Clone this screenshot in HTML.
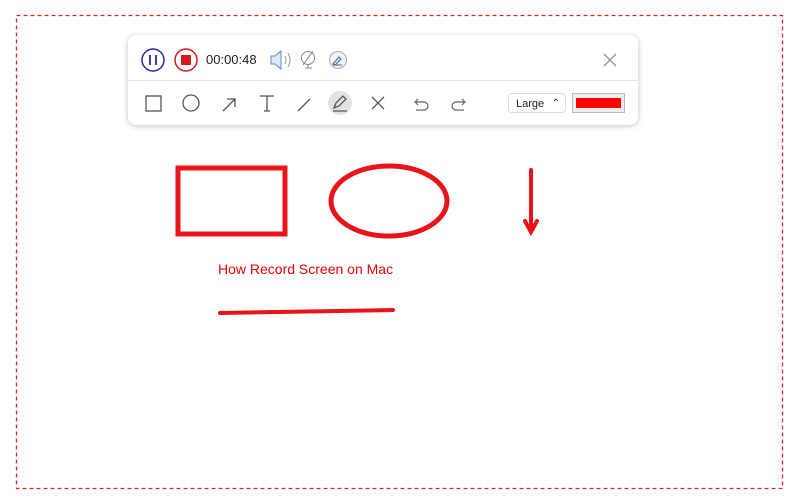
<!DOCTYPE html>
<html><head><style>
body{margin:0;width:800px;height:502px;background:#fff;position:relative;overflow:hidden;font-family:"Liberation Sans",sans-serif}
.tb{position:absolute;left:128px;top:35px;width:510px;height:90px;background:#fff;border-radius:8px;box-shadow:0 1px 6px rgba(0,0,0,.25)}
.sep{position:absolute;left:0;right:0;top:45px;height:1px;background:#e6e6e6}
.time{position:absolute;left:78px;top:17px;font-size:13px;color:#222}
.sel{position:absolute;left:380px;top:58px;width:58px;height:20px;border:1px solid #ddd;border-radius:4px;font-size:11px;color:#222;line-height:20px;padding-left:7px;box-sizing:border-box}
.col{position:absolute;left:444px;top:58px;width:53px;height:20px;border:1px solid #bbb;box-sizing:border-box;background:#eee}
.col div{position:absolute;left:3px;top:4px;right:3px;bottom:4px;background:#f00}
.txt{position:absolute;left:218px;top:261px;font-size:14px;color:#e00}
</style></head><body>
<svg width="800" height="502" style="position:absolute;left:0;top:0" fill="none">
<rect x="16.5" y="15.5" width="766" height="473" stroke="#e0282a" stroke-width="1.3" stroke-dasharray="4 3"/>
</svg>
<div class="tb">
<svg width="510" height="90" style="position:absolute;left:0;top:0" fill="none">
<circle cx="25" cy="25" r="11" stroke="#2a2aa0" stroke-width="1.5"/><path d="M22 20v10M28 20v10" stroke="#2a2aa0" stroke-width="1.8"/>
<circle cx="58" cy="25" r="11" stroke="#d01c1c" stroke-width="1.5"/><rect x="53" y="20" width="10" height="10" fill="#d01c1c"/>
<path d="M143 21h4l6-5v18l-6-5h-4z" stroke="#5a8ec4" fill="#dce9f6"/><path d="M157 21q2 4 0 8M160 18q4 7 0 14" stroke="#999"/>
<circle cx="180" cy="23" r="6.5" stroke="#888"/><path d="M175 30l10-14M177 33h7M180 30v3" stroke="#888"/>
<circle cx="210" cy="25" r="8.5" stroke="#aaa" fill="#f3f3f3"/><path d="M205 29l6-7 2 2-6 6zM205 30h9" stroke="#3466a8"/>
<path d="M476 19l12 12M488 19l-12 12" stroke="#999" stroke-width="1.5"/>
<rect x="18" y="61" width="15" height="15" stroke="#555" stroke-width="1.3"/>
<circle cx="63" cy="68" r="8" stroke="#555" stroke-width="1.3"/>
<path d="M95 76l12-12M99 64h8v8" stroke="#555" stroke-width="1.3"/>
<path d="M132 61h14M139 61v15M136 76h6" stroke="#555" stroke-width="1.3"/>
<path d="M170 76l12-12" stroke="#555" stroke-width="1.3"/>
<circle cx="212" cy="68" r="12" fill="#e2e2e2"/><path d="M206 73l2-5 7-7 3 3-7 7zM205 76h14" stroke="#555" stroke-width="1.3"/>
<path d="M244 62l12 12M256 62l-12 12" stroke="#555" stroke-width="1.3"/>
<path d="M290 64l-3 3 3 3M287 67h9a4 4 0 010 8h-8" stroke="#666" stroke-width="1.2"/>
<path d="M334 64l3 3-3 3M337 67h-9a4 4 0 000 8h8" stroke="#666" stroke-width="1.2"/>
</svg>
<div class="sep"></div>
<div class="time">00:00:48</div>
<div class="sel">Large<span style="position:absolute;right:5px;top:0;font-size:10px">⌃</span></div>
<div class="col"><div></div></div>
</div>
<svg width="800" height="502" style="position:absolute;left:0;top:0" fill="none" stroke="#e8141a" stroke-linecap="round">
<rect x="178" y="168" width="107" height="66" stroke-width="5"/>
<ellipse cx="389" cy="201" rx="58" ry="35" stroke-width="5"/>
<path d="M531 170v60M525 221l6 11 6-11" stroke-width="4"/>
<path d="M220 313L393 310" stroke-width="4"/>
</svg>
<div class="txt">How Record Screen on Mac</div>
</body></html>
